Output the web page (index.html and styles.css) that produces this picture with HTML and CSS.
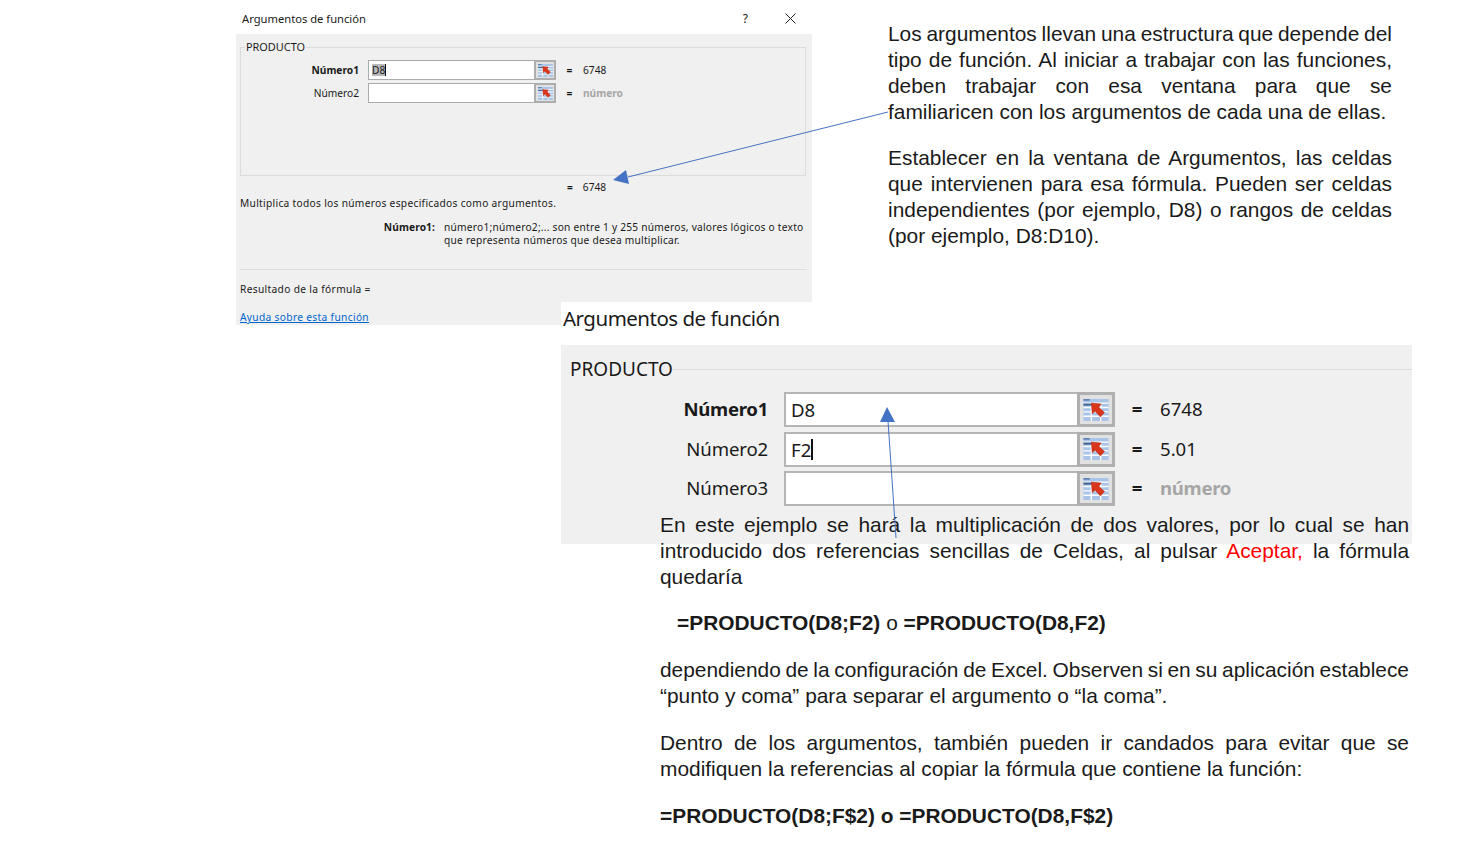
FILE: index.html
```html
<!DOCTYPE html>
<html lang="es">
<head>
<meta charset="utf-8">
<title>Argumentos de función</title>
<link rel="stylesheet" href="styles.css">
</head>
<body>
<svg class="defs" width="0" height="0" aria-hidden="true">
  <symbol id="refedit" viewBox="0 0 16 14">
    <rect x="0" y="0" width="16" height="14" fill="#a9c4e8"/>
    <path d="M0 2.6H16M0 5.4H16M0 8.2H16M0 11H16M5 2.6V14M11 2.6V14" stroke="#fff" stroke-width=".9" fill="none"/>
    <rect x="0" y="2.9" width="6" height="1.3" fill="#44628e"/>
    <rect x="0" y="0" width="4" height="1.1" fill="#5f82b4"/>
    <path d="M5 2.6 11.4 3.2 9.8 5.2 13.4 8.6 10.8 11.4 7.4 7.8 5.6 9.4Z" fill="#d8351c" stroke="#b02a12" stroke-width=".3"/>
  </symbol>
</svg>

<section class="dlg dlg-small">
  <header class="titlebar">
    <span class="title">Argumentos de función</span>
    <span class="help">?</span>
    <svg class="close" width="11" height="11" viewBox="0 0 11 11"><path d="M.5.5 10.5 10.5M10.5.5.5 10.5" stroke="#222" stroke-width="1" fill="none"/></svg>
  </header>
  <div class="panel">
    <div class="group">
      <span class="legend">PRODUCTO</span>
      <div class="rows">
        <span class="lbl strong">Número1</span>
        <div class="field"><span class="val"><span class="sel">D8</span><span class="caret"></span></span><span class="btn"><svg class="ico"><use href="#refedit"/></svg></span></div>
        <span class="eq">=</span><span class="res">6748</span>
        <span class="lbl">Número2</span>
        <div class="field"><span class="val"></span><span class="btn"><svg class="ico"><use href="#refedit"/></svg></span></div>
        <span class="eq">=</span><span class="res muted">número</span>
      </div>
    </div>
    <div class="total"><span class="eq">=</span><span class="res">6748</span></div>
    <p class="desc">Multiplica todos los números especificados como argumentos.</p>
    <div class="note">
      <b class="note-k">Número1:</b>
      <span class="note-v">número1;número2;... son entre 1 y 255 números, valores lógicos o texto<br>que representa números que desea multiplicar.</span>
    </div>
    <hr class="rule">
    <p class="result">Resultado de la fórmula =</p>
    <a class="link" href="#">Ayuda sobre esta función</a>
  </div>
</section>

<section class="dlg dlg-large">
  <header class="titlebar-l">Argumentos de función</header>
  <div class="panel-l">
    <div class="legend-row"><span class="legend-l">PRODUCTO</span><span class="legend-line"></span></div>
    <div class="rows-l">
      <span class="lbl strong">Número1</span>
      <div class="field"><span class="val">D8</span><span class="btn"><svg class="ico"><use href="#refedit"/></svg></span></div>
      <span class="eq">=</span><span class="res">6748</span>
      <span class="lbl">Número2</span>
      <div class="field"><span class="val">F2<span class="caret"></span></span><span class="btn"><svg class="ico"><use href="#refedit"/></svg></span></div>
      <span class="eq">=</span><span class="res">5.01</span>
      <span class="lbl">Número3</span>
      <div class="field"><span class="val"></span><span class="btn"><svg class="ico"><use href="#refedit"/></svg></span></div>
      <span class="eq">=</span><span class="res muted">número</span>
    </div>
  </div>
</section>

<div class="txt txt-top">
  <p>
    <span class="ln tight">Los argumentos llevan una estructura que depende del</span>
    <span class="ln">tipo de función. Al iniciar a trabajar con las funciones,</span>
    <span class="ln">deben trabajar con esa ventana para que se</span>
    <span class="last">familiaricen con los argumentos de cada una de ellas.</span>
  </p>
  <p>
    <span class="ln">Establecer en la ventana de Argumentos, las celdas</span>
    <span class="ln">que intervienen para esa fórmula. Pueden ser celdas</span>
    <span class="ln">independientes (por ejemplo, D8) o rangos de celdas</span>
    <span class="last">(por ejemplo, D8:D10).</span>
  </p>
</div>

<div class="txt txt-bottom">
  <p>
    <span class="ln">En este ejemplo se hará la multiplicación de dos valores, por lo cual se han</span>
    <span class="ln">introducido dos referencias sencillas de Celdas, al pulsar <span class="red">Aceptar,</span> la fórmula</span>
    <span class="last">quedaría</span>
  </p>
  <p class="indent"><b>=PRODUCTO(D8;F2)</b> o <b>=PRODUCTO(D8,F2)</b></p>
  <p>
    <span class="ln tight">dependiendo de la configuración de Excel. Observen si en su aplicación establece</span>
    <span class="last">“punto y coma” para separar el argumento o “la coma”.</span>
  </p>
  <p>
    <span class="ln">Dentro de los argumentos, también pueden ir candados para evitar que se</span>
    <span class="last">modifiquen la referencias al copiar la fórmula que contiene la función:</span>
  </p>
  <p><b>=PRODUCTO(D8;F$2) o =PRODUCTO(D8,F$2)</b></p>
</div>

<svg class="arrows" width="1465" height="844" viewBox="0 0 1465 844" aria-hidden="true">
  <path d="M888 112 628 177" stroke="#4472c4" stroke-width="1" fill="none"/>
  <path d="M613 180 626 170 629 184Z" fill="#4472c4"/>
  <path d="M896 538 888 421" stroke="#4472c4" stroke-width="1" fill="none"/>
  <path d="M887 407 880 422 895 422Z" fill="#4472c4"/>
</svg>
</body>
</html>
```

FILE: styles.css
```css
* { box-sizing: border-box; }
html, body { margin: 0; padding: 0; }
body {
  position: relative;
  width: 1465px;
  height: 844px;
  overflow: hidden;
  background: #fff;
  font-family: "Noto Sans", "Open Sans", sans-serif;
  color: #1a1a1a;
}
.defs { position: absolute; }

/* Slide objects: each one sits at its own place on the free canvas */
.dlg, .txt, .arrows { position: absolute; }
.arrows { left: 0; top: 0; pointer-events: none; }

/* Shared dialog parts */
.lbl { text-align: right; }
.strong { font-weight: 700; }
.field { display: flex; height: 100%; border: 1px solid #ababab; background: #fff; }
.val { flex: 1; display: flex; align-items: center; }
.caret { display: inline-block; background: #111; }
.btn { display: flex; align-items: center; justify-content: center; background: #e1e1e1; border-style: solid; border-color: #adadad; }
.eq { text-align: center; font-weight: 700; }
.res { white-space: nowrap; }
.muted { color: #a6a6a6; font-weight: 700; }

/* Small dialog */
.dlg-small { left: 236px; top: 0; width: 576px; height: 325px; font-size: 10.2px; }
.titlebar { height: 34px; display: flex; align-items: center; padding: 3px 0 0 6px; background: #fff; }
.title { font-size: 11.2px; flex: 1; }
.help { font-size: 12px; margin-right: 37px; }
.close { margin-right: 16px; }
.panel { height: 291px; background: #f0f0f0; padding: 13px 6px 0 4px; }
.group { position: relative; height: 129px; border: 1px solid #dcdcdc; padding-top: 12px; }
.legend { position: absolute; left: 4px; top: -8px; padding: 0 1px; background: #f0f0f0; font-size: 10.9px; line-height: 13px; }
.rows {
  display: grid;
  grid-template-columns: 118px 197px 27px auto;
  grid-auto-rows: 20px;
  row-gap: 3px;
  align-items: center;
}
.rows .field { margin-left: 9px; width: 188px; }
.rows .val { padding-left: 3px; }
.rows .btn { width: 22px; margin: -1px -1px -1px 0; border-width: 2px; }
.rows .ico { width: 15px; height: 13px; }
.rows .sel { background: #b8b8b8; line-height: 12px; }
.rows .caret { width: 1px; height: 12px; }
.total { display: flex; margin-left: 327px; height: 22px; align-items: center; gap: 10px; }
.desc { margin: -2px 0 0; line-height: 14px; letter-spacing: .3px; }
.note { display: flex; margin-top: 11px; line-height: 13px; }
.note-k { width: 196px; text-align: right; flex: none; margin-left: -1px; letter-spacing: .1px; }
.note-v { margin-left: 9px; white-space: nowrap; letter-spacing: .23px; }
.rule { margin: 22px -1px 0 0; border: 0; border-top: 1px solid #dcdcdc; }
.result { margin: 12px 0 0; line-height: 14px; letter-spacing: .33px; }
.link { display: block; margin-top: 14px; line-height: 14px; color: #0066cc; text-decoration: underline; letter-spacing: .33px; }

/* Large dialog */
.dlg-large { left: 561px; top: 302px; width: 851px; height: 242px; font-size: 18.6px; }
.titlebar-l { height: 43px; background: #fff; width: 251px; font-size: 20.5px; line-height: 33px; padding-left: 2px; white-space: nowrap; letter-spacing: -.5px; }
.panel-l { height: 199px; background: #f0f0f0; padding-top: 12px; }
.legend-row { display: flex; align-items: center; height: 24px; padding-left: 9px; }
.legend-l { font-size: 19px; }
.legend-line { flex: 1; height: 1px; background: #dcdcdc; }
.rows-l {
  display: grid;
  grid-template-columns: 207px 347px 44px auto;
  grid-auto-rows: 35px;
  row-gap: 4.5px;
  align-items: center;
  margin-top: 11px;
}
.rows-l .lbl { line-height: 31px; margin-bottom: 2px; letter-spacing: -.15px; }
.rows-l .strong { letter-spacing: -.3px; }
.rows-l .field { margin-left: 16px; width: 331px; border-width: 2px; border-color: #b5b5b5; }
.rows-l .val { padding-left: 5px; line-height: 33px; }
.rows-l .caret { height: 21px; width: 1.5px; }
.rows-l .btn { width: 38px; margin: -2px -2px -2px 0; border-width: 3px; border-color: #b0b0b0; }
.rows-l .ico { width: 26px; height: 22px; }
.rows-l .eq, .rows-l .res { line-height: 31px; margin-bottom: 2px; }
.rows-l .res { padding-left: 1px; }
.rows-l .muted { letter-spacing: -.3px; }

/* Slide body text */
.txt { font-family: "Liberation Sans", Arial, sans-serif; font-size: 20.9px; line-height: 26px; color: #1a1a1a; }
.txt p { margin: 0 0 20px; }
.ln { display: block; text-align: justify; text-align-last: justify; }
.last { display: block; }
.tight { word-spacing: -1.2px; }
.txt-top { left: 888px; top: 21px; width: 504px; }
.txt-bottom { left: 660px; top: 512px; width: 749px; }
.txt-bottom p { margin-bottom: 21px; }
.txt-bottom p:first-child { margin-bottom: 20px; }
.indent { padding-left: 17px; }
.red { color: #ff0000; }
```
